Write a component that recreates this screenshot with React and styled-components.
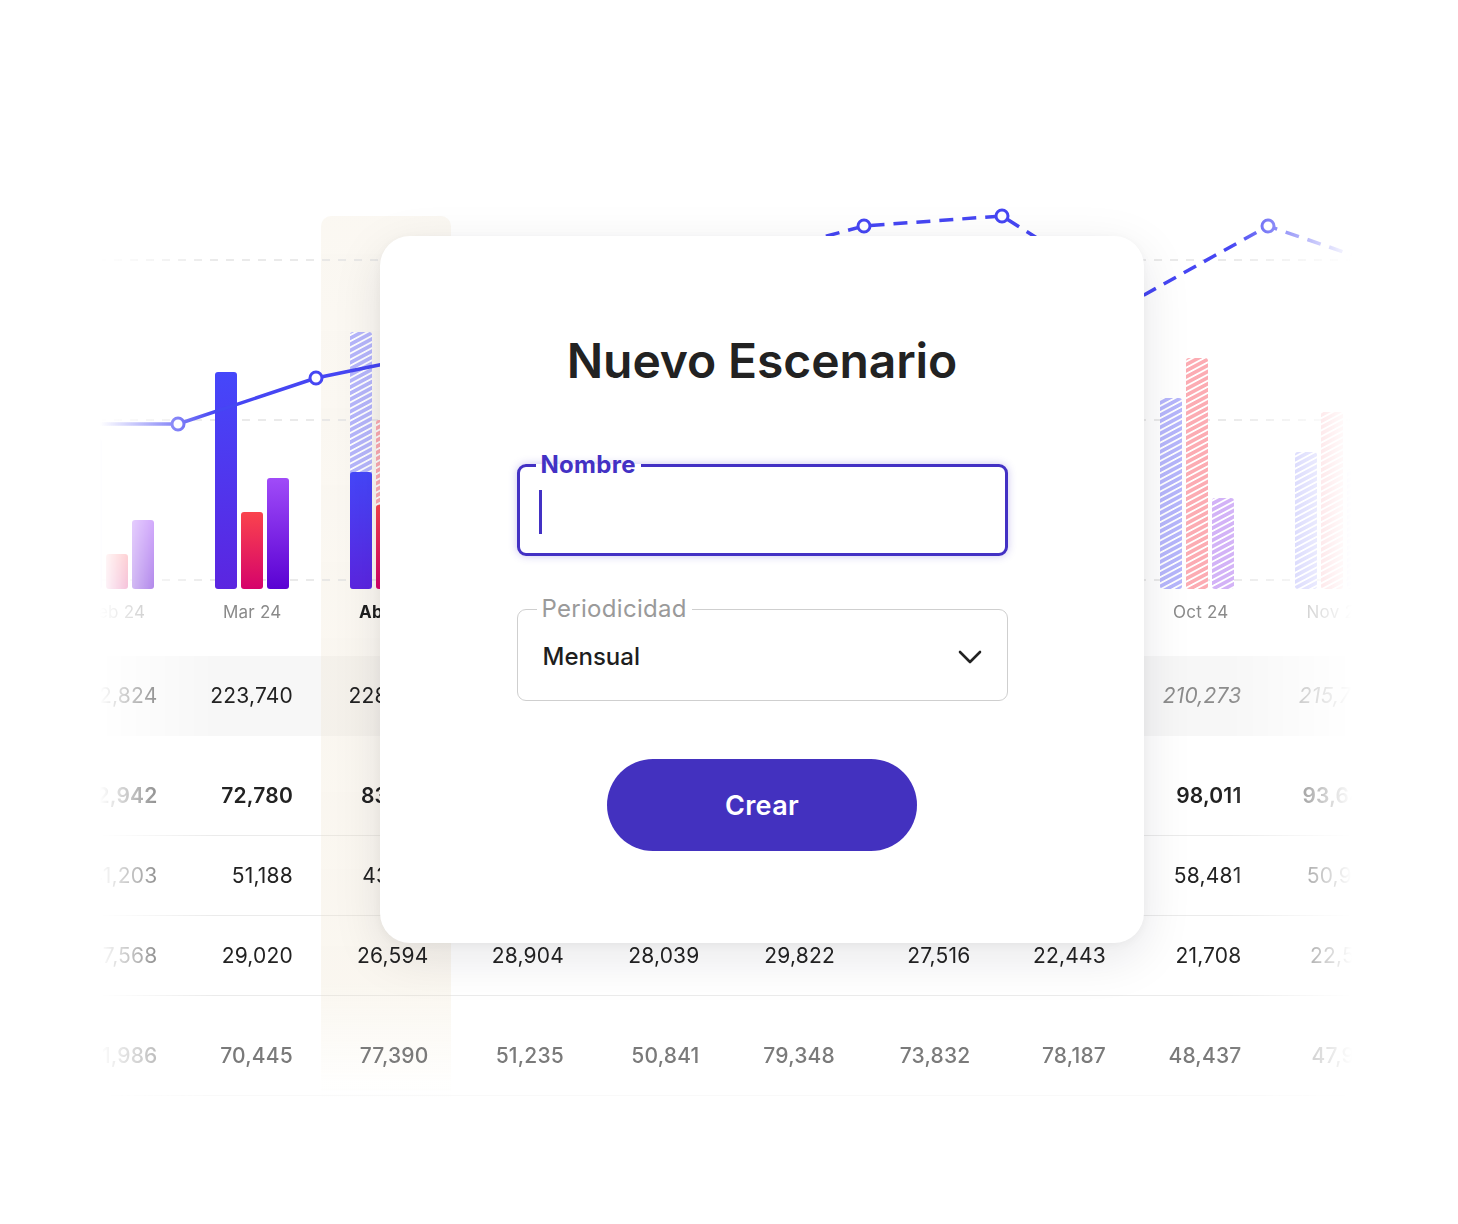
import React from 'react';
import styled, { createGlobalStyle } from 'styled-components';

const GlobalStyle = createGlobalStyle`
  html, body { margin: 0; padding: 0; background: #fff; }
  body {
    font-family: Inter, "Liberation Sans", sans-serif;
    color: #222;
    -webkit-font-smoothing: antialiased;
  }
  * { box-sizing: border-box; }
`;

// chart drawing step and table column width (the table runs a touch wider)
const COL = 135;
const GRID_COL = 135.5;
const BASE = 399;
const CURRENT = 2;

const months = ['Feb 24', 'Mar 24', 'Abr 24', 'May 24', 'Jun 24', 'Jul 24', 'Ago 24', 'Sep 24', 'Oct 24', 'Nov 24'];

// per month: blue, red, purple -> h = actual height, f = forecast height
const bars = [
  [{ h: 150 }, { h: 35 }, { h: 69 }],
  [{ h: 217 }, { h: 77 }, { h: 111 }],
  [{ h: 117, f: 257 }, { h: 84, f: 169 }, { h: 80, f: 200 }],
  [{ f: 230 }, { f: 180 }, { f: 110 }],
  [{ f: 240 }, { f: 190 }, { f: 120 }],
  [{ f: 260 }, { f: 200 }, { f: 100 }],
  [{ f: 250 }, { f: 215 }, { f: 95 }],
  [{ f: 220 }, { f: 225 }, { f: 90 }],
  [{ f: 191 }, { f: 231 }, { f: 91 }],
  [{ f: 137 }, { f: 177 }, { f: 120 }],
];

const series = ['blue', 'red', 'purple'];

const points = [
  [-8, 234], [128, 234], [266, 188], [402, 160], [540, 112],
  [677, 73], [814, 36], [952, 26], [1085, 110], [1218, 36], [1352, 82],
];

const rows = [
  {
    kind: 'total',
    values: ['212,824', '223,740', '228,961', '219,402', '224,118', '231,507', '226,380', '218,944', '210,273', '215,736'],
  },
  {
    kind: 'bold',
    values: ['62,942', '72,780', '83,125', '88,406', '91,230', '95,874', '97,102', '96,355', '98,011', '93,648'],
  },
  {
    kind: 'plain',
    values: ['41,203', '51,188', '43,671', '47,932', '52,410', '55,026', '56,719', '57,304', '58,481', '50,927'],
  },
  {
    kind: 'plain',
    values: ['27,568', '29,020', '26,594', '28,904', '28,039', '29,822', '27,516', '22,443', '21,708', '22,519'],
  },
  {
    kind: 'muted',
    values: ['61,986', '70,445', '77,390', '51,235', '50,841', '79,348', '73,832', '78,187', '48,437', '47,912'],
  },
  {
    kind: 'muted',
    values: ['38,214', '40,556', '41,903', '36,780', '39,412', '42,065', '40,318', '37,904', '35,661', '36,207'],
  },
];

const rowTemplate = [80, 100, 80, 80, 100, 80];

const Chart = () => {
  const solid = points.slice(0, 4).map((p) => p.join(' ')).join(' L ');
  const dashed = points.slice(3).map((p) => p.join(' ')).join(' L ');
  return (
    <ChartSvg width={COL * 10} height={400} viewBox={`0 0 ${COL * 10} 400`}>
      <defs>
        <linearGradient id="g-blue" x1="0" y1="0" x2="0" y2="1">
          <stop offset="0" stopColor="#4547fa" />
          <stop offset="1" stopColor="#5b25e0" />
        </linearGradient>
        <linearGradient id="g-red" x1="0" y1="0" x2="0" y2="1">
          <stop offset="0" stopColor="#fa434d" />
          <stop offset="1" stopColor="#d5036b" />
        </linearGradient>
        <linearGradient id="g-purple" x1="0" y1="0" x2="0" y2="1">
          <stop offset="0" stopColor="#a04bf8" />
          <stop offset="1" stopColor="#5a02d3" />
        </linearGradient>
        {[
          ['blue', '#b6b6fb'],
          ['red', '#fcacb3'],
          ['purple', '#d3b3f7'],
        ].map(([id, color]) => (
          <pattern
            key={id}
            id={`h-${id}`}
            width="6"
            height="5.4"
            patternUnits="userSpaceOnUse"
            patternTransform="rotate(-28)"
          >
            <rect width="6" height="5.4" fill="#fff" />
            <rect width="6" height="3.6" fill={color} />
          </pattern>
        ))}
      </defs>

      {[70, 230, 390].map((y) => (
        <line key={y} x1="0" x2={COL * 10} y1={y} y2={y} stroke="#e4e4e4" strokeWidth="1.5" strokeDasharray="8 8" />
      ))}

      {bars.map((group, k) =>
        group.map((b, i) => {
          const x = COL * k + 30 + i * 26;
          return (
            <g key={`${k}-${i}`}>
              {b.f && <rect x={x} y={BASE - b.f} width="22" height={b.f} rx="3" fill={`url(#h-${series[i]})`} />}
              {b.h && <rect x={x} y={BASE - b.h} width="22" height={b.h} rx="3" fill={`url(#g-${series[i]})`} />}
            </g>
          );
        })
      )}

      <path d={`M ${solid}`} fill="none" stroke="#4646f3" strokeWidth="3.5" strokeLinejoin="round" />
      <path d={`M ${dashed}`} fill="none" stroke="#4646f3" strokeWidth="3.5" strokeDasharray="14 9" />
      {points.slice(1, -1).map(([x, y]) => (
        <circle key={x} cx={x} cy={y} r="6" fill="#fff" stroke="#4646f3" strokeWidth="3" />
      ))}
    </ChartSvg>
  );
};

const App = () => {
  return (
    <>
      <GlobalStyle />
      <Stage>
        <SideFade>
          <BottomFade>
            <Board>
              {rowTemplate.map((_, r) => (
                <RowBg key={r} $row={r + 3} $kind={rows[r].kind} $last={r >= 4} />
              ))}
              <Highlight />
              <ChartArea>
                <Chart />
              </ChartArea>
              {months.map((m, k) => (
                <MonthLabel key={m} $col={k + 1} $current={k === CURRENT}>
                  {m}
                </MonthLabel>
              ))}
              {rows.map((row, r) =>
                row.values.map((v, k) => (
                  <Cell
                    key={`${r}-${k}`}
                    $row={r + 3}
                    $col={k + 1}
                    $kind={row.kind}
                    $tall={rowTemplate[r] === 100}
                    $forecast={row.kind === 'total' && k > CURRENT}
                  >
                    {v}
                  </Cell>
                ))
              )}
            </Board>
          </BottomFade>
        </SideFade>

        <Modal>
          <Title>Nuevo Escenario</Title>
          <Field $active>
            <Legend $active>Nombre</Legend>
            <FieldBody $active>
              <Caret />
            </FieldBody>
          </Field>
          <Field>
            <Legend>Periodicidad</Legend>
            <FieldBody>
              <Value>Mensual</Value>
              <svg width="24" height="14" viewBox="0 0 24 14">
                <polyline points="2,2 12,12 22,2" fill="none" stroke="#222" strokeWidth="2.6" strokeLinecap="round" strokeLinejoin="round" />
              </svg>
            </FieldBody>
          </Field>
          <CreateButton>Crear</CreateButton>
        </Modal>
      </Stage>
    </>
  );
};

export default App;

const Stage = styled.div`
  position: relative;
  width: 1458px;
  height: 1224px;
  overflow: hidden;
  background: #fff;
  padding: 190px 0 0 50px;
`;

const SideFade = styled.div`
  width: ${GRID_COL * 10}px;
  -webkit-mask-image: linear-gradient(to right, transparent 50px, #000 165px, #000 1180px, transparent 1302px);
  mask-image: linear-gradient(to right, transparent 50px, #000 165px, #000 1180px, transparent 1302px);
`;

const BottomFade = styled.div`
  -webkit-mask-image: linear-gradient(to bottom, #000 878px, transparent 932px);
  mask-image: linear-gradient(to bottom, #000 878px, transparent 932px);
`;

const Board = styled.div`
  display: grid;
  grid-template-columns: repeat(10, ${GRID_COL}px);
  grid-template-rows: 400px 66px ${rowTemplate.map((h) => `${h}px`).join(' ')};
`;

const RowBg = styled.div`
  grid-column: 1 / -1;
  grid-row: ${(p) => p.$row};
  background: ${(p) => (p.$kind === 'total' ? '#f7f7f7' : 'transparent')};
  border-bottom: ${(p) =>
    p.$kind === 'total' ? 'none' : p.$last ? '1.5px solid #f3f3f3' : '1.5px solid #ebebeb'};
`;

const Highlight = styled.div`
  grid-column: 3;
  grid-row: 1 / -1;
  margin-top: 26px;
  margin-right: 6px;
  border-radius: 10px 10px 0 0;
  background: linear-gradient(
    to bottom,
    rgba(236, 222, 196, 0.22) 0,
    rgba(236, 222, 196, 0.26) 80%,
    rgba(236, 222, 196, 0) 92%
  );
`;

const ChartArea = styled.div`
  grid-column: 1 / -1;
  grid-row: 1;
`;

const ChartSvg = styled.svg`
  display: block;
  overflow: visible;
`;

const MonthLabel = styled.div`
  grid-row: 2;
  grid-column: ${(p) => p.$col};
  padding-top: 11px;
  padding-right: 2px;
  text-align: center;
  font-size: 17px;
  line-height: 22px;
  letter-spacing: 0.2px;
  font-weight: ${(p) => (p.$current ? 700 : 400)};
  color: ${(p) => (p.$current ? '#1e1e1e' : '#8a8a8a')};
`;

const cellWeight = { total: 400, bold: 600, plain: 400, muted: 500 };

const Cell = styled.div`
  grid-row: ${(p) => p.$row};
  grid-column: ${(p) => p.$col};
  align-self: center;
  margin-top: ${(p) => (p.$tall ? '20px' : '0')};
  padding-right: 28px;
  text-align: right;
  font-size: 21px;
  line-height: 24px;
  letter-spacing: 0.2px;
  font-weight: ${(p) => cellWeight[p.$kind]};
  font-style: ${(p) => (p.$forecast ? 'italic' : 'normal')};
  color: ${(p) => (p.$forecast ? '#8c8c8c' : p.$kind === 'muted' ? '#7a7a7a' : '#222')};
`;

const Modal = styled.div`
  position: absolute;
  left: 380px;
  top: 236px;
  width: 764px;
  display: flex;
  flex-direction: column;
  align-items: center;
  padding: 95px 0 92px;
  background: #fff;
  border-radius: 30px;
  box-shadow: 0 14px 50px rgba(20, 20, 40, 0.1), 0 2px 10px rgba(0, 0, 0, 0.04);
`;

const Title = styled.h1`
  margin: 0 0 60px;
  font-size: 48px;
  line-height: 60px;
  font-weight: 600;
  color: #222;
  letter-spacing: -0.1px;
`;

const Field = styled.fieldset`
  width: 491px;
  min-inline-size: 0;
  margin: 0 0 ${(p) => (p.$active ? '39px' : '0')};
  padding: 0 25px ${(p) => (p.$active ? '8px' : '10px')} ${(p) => (p.$active ? '16px' : '19px')};
  border: ${(p) => (p.$active ? '3px solid #4331c4' : '1.5px solid #cfcfcf')};
  border-radius: 9px;
  box-shadow: ${(p) => (p.$active ? '0 0 8px rgba(67, 49, 196, 0.28)' : 'none')};
`;

const Legend = styled.legend`
  padding: 0 5px;
  font-size: 24px;
  line-height: 28px;
  letter-spacing: 0.3px;
  font-weight: ${(p) => (p.$active ? 700 : 400)};
  color: ${(p) => (p.$active ? '#4331c4' : '#9a9a9a')};
`;

const FieldBody = styled.div`
  display: flex;
  align-items: center;
  justify-content: space-between;
  height: ${(p) => (p.$active ? '66px' : '67px')};
`;

const Caret = styled.span`
  display: block;
  width: 3px;
  height: 44px;
  margin-left: 3px;
  background: #4331c4;
`;

const Value = styled.span`
  margin-left: 6px;
  font-size: 24px;
  font-weight: 500;
  color: #1e1e1e;
`;

const CreateButton = styled.button`
  margin-top: 58px;
  width: 310px;
  height: 92px;
  padding-top: 2px;
  border: none;
  border-radius: 46px;
  background: #4331bf;
  color: #fff;
  font-family: inherit;
  font-size: 27px;
  font-weight: 600;
  letter-spacing: 0.3px;
  cursor: pointer;
`;
